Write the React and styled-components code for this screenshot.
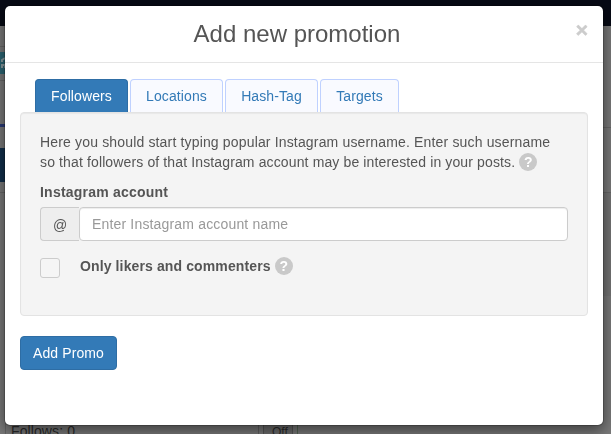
import React from 'react';
import styled, { createGlobalStyle } from 'styled-components';

const GlobalStyle = createGlobalStyle`
  * {
    box-sizing: border-box;
  }

  body {
    margin: 0;
    overflow: hidden;
    color: #555;
    font: 14px/20px "Liberation Sans", Arial, sans-serif;
  }
`;

const Page = styled.div`
  display: flex;
  flex-direction: column;
  height: 434px;
  overflow: hidden;
  background: #7b7b7b;
`;

const Navbar = styled.div`
  flex: none;
  height: 26px;
  background: #070a15;
`;

const PageBody = styled.div`
  display: flex;
  justify-content: space-between;
  flex: none;
  height: 397px;
`;

const PageColumn = styled.div`
  width: 12px;
`;

const Band = styled.div`
  height: ${({ $height }) => $height}px;
  background: ${({ $color }) => $color || 'transparent'};
  border-bottom: ${({ $line }) => ($line ? '1px solid #696969' : '0')};
`;

const TealButton = styled.div`
  display: flex;
  align-items: center;
  height: 22px;
  padding-left: 1px;
  background: #2d6775;
  color: #8b9da1;
`;

const PageFooter = styled.div`
  display: flex;
  flex: none;
  height: 40px;
  margin-left: 5px;
  border-left: 1px solid #666;
  color: #2b2b2b;
`;

const FollowsCell = styled.div`
  width: 253px;
  padding-left: 5px;
  border-right: 1px solid #616161;
  letter-spacing: 0.1px;
  line-height: 16px;
`;

const OffButton = styled.div`
  width: 30px;
  margin-left: 4px;
  padding-left: 8px;
  border: solid #575757;
  border-width: 0 1px;
  background: #6e6e6e;
  font-size: 12px;
  line-height: 18px;
`;

const GreenEdge = styled.div`
  width: 1px;
  margin-left: 4px;
  background: #536653;
`;

const Modal = styled.div`
  position: fixed;
  top: 5px;
  left: 4px;
  width: 600px;
  height: 421px;
  border: 1px solid rgba(0, 0, 0, 0.2);
  border-radius: 6px;
  background: #fff;
  background-clip: padding-box;
  box-shadow: 0 5px 15px rgba(0, 0, 0, 0.5);
`;

const ModalHeader = styled.div`
  display: grid;
  grid-template-columns: 1fr 20px;
  height: 57px;
  padding: 0 11px 0 15px;
  border-bottom: 1px solid #e5e5e5;
`;

const ModalTitle = styled.h4`
  margin: 0;
  padding-left: 2px;
  text-align: center;
  font-size: 24px;
  font-weight: 400;
  line-height: 56px;
  white-space: nowrap;
`;

const CloseButton = styled.button`
  align-self: start;
  margin-top: 13px;
  padding: 0;
  border: 0;
  background: none;
  color: #ccc;
  font: bold 21px/21px "Liberation Sans", Arial, sans-serif;
  -webkit-text-stroke: 0.5px #ccc;
`;

const ModalBody = styled.div`
  padding: 16px 15px 0;
`;

const Tabs = styled.ul`
  display: flex;
  gap: 2px;
  margin: 0;
  padding: 0 15px;
  list-style: none;
`;

const Tab = styled.li`
  width: ${({ $width }) => $width}px;
  height: 33px;
  border: 1px solid ${({ $active }) => ($active ? '#2e6da4' : '#bfd1ff')};
  border-bottom: 0;
  border-radius: 4px 4px 0 0;
  background: ${({ $active }) => ($active ? '#337ab7' : '#f9faff')};
  color: ${({ $active }) => ($active ? '#fff' : '#337ab7')};
  letter-spacing: 0.1px;
  line-height: 32px;
  text-align: center;
`;

const Well = styled.div`
  height: 204px;
  padding: 19px;
  border: 1px solid #e3e3e3;
  border-radius: 4px;
  background: #f4f4f4;
  box-shadow: inset 0 1px 1px rgba(0, 0, 0, 0.05);
`;

const Hint = styled.p`
  margin: 0;
  letter-spacing: 0.13px;
  white-space: nowrap;

  &::first-line {
    letter-spacing: 0.16px;
  }
`;

const HelpIcon = styled.span`
  display: inline-block;
  width: 18px;
  height: 18px;
  border-radius: 50%;
  background: #c9c9c9;
  color: #fff;
  font-size: 14px;
  font-weight: 700;
  letter-spacing: 0;
  line-height: 18px;
  text-align: center;
`;

const Label = styled.label`
  display: block;
  margin: 10px 0 5px;
  font-weight: 700;
  letter-spacing: 0.22px;
`;

const InputGroup = styled.div`
  display: flex;
  width: 528px;
  height: 34px;
`;

const Addon = styled.span`
  width: 39px;
  border: 1px solid #ccc;
  border-right: 0;
  border-radius: 4px 0 0 4px;
  background: #eee;
  line-height: 34px;
  text-align: center;
`;

const Input = styled.input`
  flex: 1;
  padding: 0 12px 1px;
  border: 1px solid #ccc;
  border-radius: 4px;
  outline: 0;
  background: #fff;
  box-shadow: inset 0 1px 1px rgba(0, 0, 0, 0.075);
  font: inherit;
  letter-spacing: 0.17px;

  &::placeholder {
    color: #999;
    opacity: 1;
  }
`;

const CheckRow = styled.div`
  display: flex;
  gap: 20px;
  margin-top: 15px;
  font-weight: 700;
  letter-spacing: 0.12px;
  white-space: nowrap;
`;

const Checkbox = styled.span`
  width: 20px;
  height: 20px;
  margin-top: 2px;
  border: 1px solid #ccc;
  border-radius: 3px;
  background: #f5f5f5;
`;

const AddButton = styled.button`
  width: 97px;
  height: 34px;
  margin-top: 20px;
  padding: 0;
  border: 1px solid #2e6da4;
  border-radius: 4px;
  background: #337ab7;
  color: #fff;
  font: inherit;
  letter-spacing: 0.1px;
`;

const tabs = [
  { name: 'Followers', width: 93 },
  { name: 'Locations', width: 93 },
  { name: 'Hash-Tag', width: 93 },
  { name: 'Targets', width: 79 },
];

const Background = () => (
  <Page>
    <Navbar />
    <PageBody>
      <PageColumn>
        <Band $height={21} $line />
        <Band $height={5} />
        <TealButton>
          <svg width="10" height="12" viewBox="0 0 10 12" fill="none">
            <path d="M1 5V3l3-2M1 11V8h3v3M7 1v10" stroke="currentColor" strokeWidth="2" />
          </svg>
        </TealButton>
        <Band $height={7} $line />
        <Band $height={43} />
        <Band $height={3} $color="#2c3c79" />
        <Band $height={21} />
        <Band $height={34} $color="#12304d" />
        <Band $height={11} $line />
      </PageColumn>
      <PageColumn>
        <Band $height={102} $line />
        <Band $height={65} $line />
        <Band $height={103} $color="#757575" />
      </PageColumn>
    </PageBody>
    <PageFooter>
      <FollowsCell>Follows: 0</FollowsCell>
      <OffButton>Off</OffButton>
      <GreenEdge />
    </PageFooter>
  </Page>
);

const App = () => (
  <>
    <GlobalStyle />
    <Background />
    <Modal>
      <ModalHeader>
        <ModalTitle>Add new promotion</ModalTitle>
        <CloseButton>×</CloseButton>
      </ModalHeader>
      <ModalBody>
        <Tabs>
          {tabs.map((tab, index) => (
            <Tab key={tab.name} $width={tab.width} $active={index === 0}>
              {tab.name}
            </Tab>
          ))}
        </Tabs>
        <Well>
          <Hint>
            Here you should start typing popular Instagram username. Enter such username
            <br />
            so that followers of that Instagram account may be interested in your posts.{' '}
            <HelpIcon>?</HelpIcon>
          </Hint>
          <Label htmlFor="account">Instagram account</Label>
          <InputGroup>
            <Addon>@</Addon>
            <Input id="account" placeholder="Enter Instagram account name" />
          </InputGroup>
          <CheckRow>
            <Checkbox />
            <span>
              Only likers and commenters <HelpIcon>?</HelpIcon>
            </span>
          </CheckRow>
        </Well>
        <AddButton>Add Promo</AddButton>
      </ModalBody>
    </Modal>
  </>
);

export default App;
